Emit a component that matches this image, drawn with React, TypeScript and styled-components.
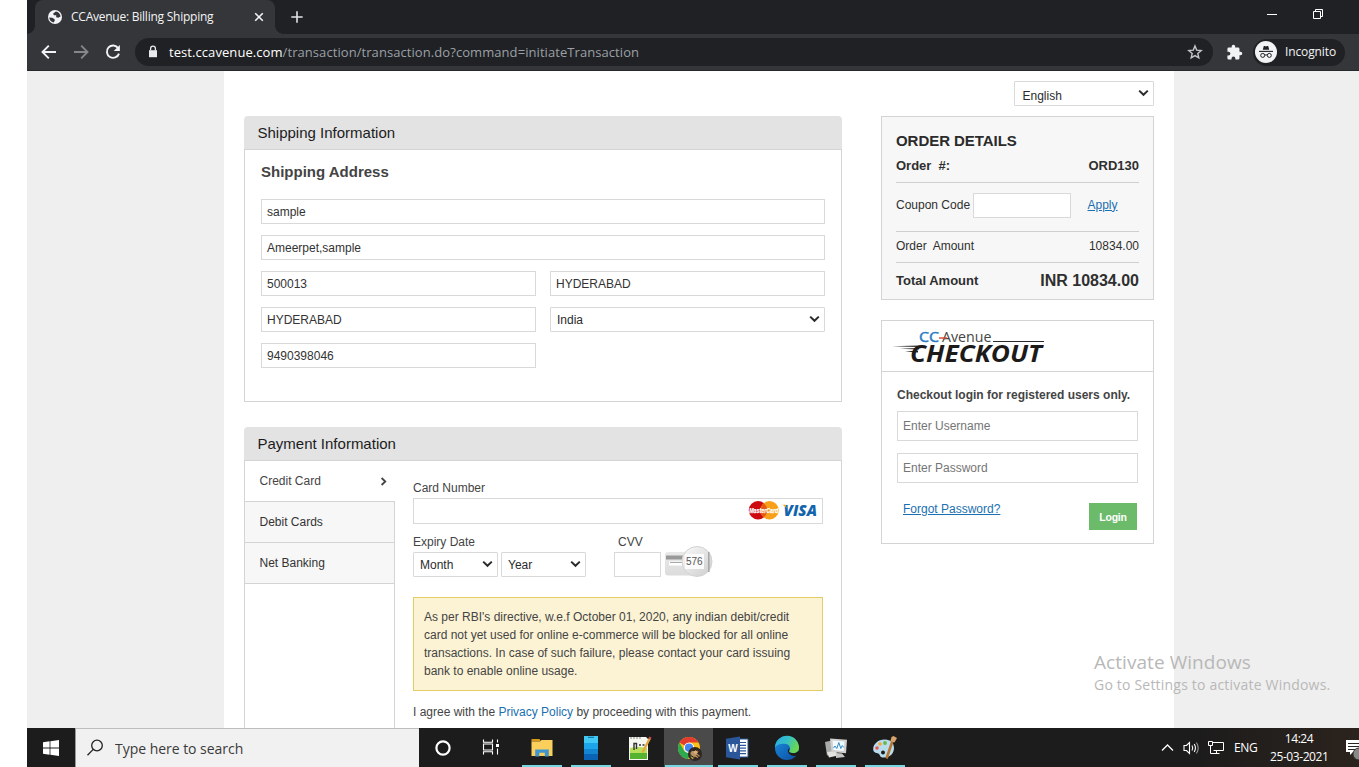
import React from 'react';
import styled, { createGlobalStyle, css } from 'styled-components';

const GlobalStyle = createGlobalStyle`
  *, *::before, *::after { box-sizing: border-box; }
  body { margin: 0; background: #fff; overflow: hidden; }
  svg { display: block; flex: none; }
`;

const uiFont = css`font-family: "Open Sans", "Noto Sans", sans-serif;`;

/* ---------- window frame ---------- */
const Screen = styled.div`
  display: flex;
  flex-direction: column;
  width: 1359px;
  height: 767px;
  padding-left: 27px;
  overflow: hidden;
  background: #fff;
  color: #333;
  font: 12px/18px "Liberation Sans", Arial, sans-serif;
`;

const TabStrip = styled.div`
  display: flex;
  flex: none;
  height: 34px;
  padding-left: 8px;
  background: #202124;
`;

const Tab = styled.div`
  position: relative;
  display: flex;
  align-items: center;
  width: 240px;
  height: 34px;
  padding-left: 12px;
  border-radius: 8px 8px 0 0;
  background: #35363a;
  ${uiFont}
  &::before, &::after {
    content: '';
    position: absolute;
    bottom: 0;
    width: 8px;
    height: 8px;
  }
  &::before { left: -8px; background: radial-gradient(circle at 0 0, transparent 7.5px, #35363a 8px); }
  &::after { right: -8px; background: radial-gradient(circle at 100% 0, transparent 7.5px, #35363a 8px); }
`;

const TabTitle = styled.span`
  width: 182px;
  margin-left: 8px;
  color: #f1f3f4;
  font-size: 12px;
  letter-spacing: -0.24px;
  white-space: nowrap;
`;

const NewTab = styled.div`
  display: flex;
  flex: 1;
  align-items: center;
  padding-left: 16px;
`;

const WindowButtons = styled.div`
  display: flex;
  align-items: center;
  gap: 36px;
  height: 28px;
  padding-right: 36px;
`;

const Toolbar = styled.div`
  display: flex;
  flex: none;
  align-items: center;
  height: 37px;
  padding-left: 13px;
  border-bottom: 1px solid #27282b;
  background: #35363a;
  ${uiFont}
`;

const NavIcons = styled.div`
  display: flex;
  gap: 14px;
  width: 95px;
`;

const Omnibox = styled.div`
  display: flex;
  align-items: center;
  width: 1078px;
  height: 28px;
  padding: 0 10px 0 10px;
  border-radius: 14px;
  background: #202124;
`;

const Url = styled.div`
  flex: 1;
  margin-left: 8px;
  color: #9aa0a6;
  font-size: 13px;
  letter-spacing: 0.07px;
  white-space: nowrap;
  b { color: #fff; font-weight: 400; }
`;

const Extension = styled.div`
  margin: 0 10px 0 13px;
`;

const Incognito = styled.div`
  display: flex;
  align-items: center;
  width: 92px;
  height: 27px;
  padding-left: 2px;
  border-radius: 14px;
  background: #202124;
  color: #f1f3f4;
  font-size: 12px;
  letter-spacing: -0.12px;
  svg { margin-right: 8px; }
`;

/* ---------- page ---------- */
const Viewport = styled.div`
  display: flex;
  flex: none;
  height: 657px;
  padding-left: 197px;
  background: #efefef;
  overflow: hidden;
`;

const Page = styled.main`
  display: flex;
  flex: none;
  width: 950px;
  height: 657px;
  padding-left: 20px;
  background: #fff;
`;

const MainColumn = styled.div`
  display: flex;
  flex-direction: column;
  gap: 25px;
  width: 598px;
  padding-top: 45px;
`;

const SideColumn = styled.div`
  display: flex;
  flex-direction: column;
  width: 273px;
  margin-left: 39px;
  padding-top: 10px;
`;

const PanelHeader = styled.h2`
  height: 33px;
  margin: 0;
  padding-left: 13.5px;
  border-radius: 4px 4px 0 0;
  background: #e3e3e3;
  color: #1c1c1c;
  font: 15px/34px "Liberation Sans", Arial, sans-serif;
`;

const PanelBody = styled.div<{ $h: number }>`
  height: ${(p) => p.$h}px;
  border: 1px solid #d4d4d4;
`;

const AddressBody = styled(PanelBody)`
  padding: 13px 16px 0;
`;

const AddressTitle = styled.h3`
  margin: 0 0 18px;
  color: #444;
  font: bold 15px/18px "Liberation Sans", Arial, sans-serif;
`;

const FieldGrid = styled.div`
  display: grid;
  grid-template-columns: 275px 275px;
  gap: 11px 14px;
`;

const Field = styled.div<{ $wide?: boolean; $w?: number; $h?: number; $hint?: boolean }>`
  display: flex;
  flex: none;
  align-items: center;
  ${(p) => p.$wide && 'grid-column: span 2;'}
  ${(p) => p.$w && `width: ${p.$w}px;`}
  height: ${(p) => p.$h ?? 25}px;
  padding-left: 5px;
  border: 1px solid #d9d9d9;
  background: #fff;
  color: ${(p) => (p.$hint ? '#757575' : '#333')};
`;

const SelectBox = styled(Field)`
  justify-content: space-between;
  padding: 0 4px 0 6px;
  border-radius: 1px;
  color: #2b2b2b;
  white-space: nowrap;
  svg { margin-bottom: 1px; }
`;

const LanguageSelect = styled(SelectBox)`
  align-self: flex-end;
  padding-left: 7.5px;
  margin-bottom: 10px;
  span { padding-top: 4px; }
  svg { margin-bottom: 2px; }
`;

const PaymentBody = styled(PanelBody)`
  display: flex;
  border-bottom: 0;
`;

const MethodList = styled.div`
  width: 150px;
  border-right: 1px solid #d4d4d4;
`;

const Method = styled.div<{ $active?: boolean }>`
  display: flex;
  align-items: center;
  justify-content: space-between;
  height: 41px;
  width: ${(p) => (p.$active ? 150 : 149)}px;
  padding: 0 7px 1px 14.5px;
  border-bottom: 1px solid #d4d4d4;
  background: ${(p) => (p.$active ? '#fff' : '#f7f7f7')};
  color: ${(p) => (p.$active ? '#444' : '#333')};
  svg { margin-top: 2px; }
`;

const CardForm = styled.div`
  width: 410px;
  margin-left: 18px;
  padding-top: 18px;
  color: #444;
`;

const CardField = styled(Field)`
  justify-content: flex-end;
  margin-top: 1px;
  padding-right: 4px;
`;

const FormLabels = styled.div`
  display: flex;
  margin-top: 9px;
  span:first-child { width: 205px; }
`;

const ExpiryRow = styled.div`
  display: flex;
  align-items: flex-end;
  height: 31px;
  margin-top: -5px;
`;

const YearSelect = styled(SelectBox)`margin: 0 28px 0 3px;`;
const CvvArt = styled.div`margin-left: 4px;`;

const Notice = styled.div`
  height: 94px;
  margin-top: 20px;
  padding: 10px 10px 0;
  border: 1px solid #e3cc62;
  background: #fcf3d5;
  color: #444;
  white-space: nowrap;
`;

const Agreement = styled.div`
  margin-top: 12px;
  a { color: #1a70b0; }
`;

const OrderBox = styled.section`
  height: 184px;
  margin-bottom: 20px;
  padding: 15px 14px 0;
  border: 1px solid #d4d4d4;
  background: #f7f7f7;
`;

const OrderTitle = styled.h3`
  height: 18px;
  margin: 0;
  color: #2b2b2b;
  font: bold 15px/18px "Liberation Sans", Arial, sans-serif;
  letter-spacing: -0.05px;
`;

const OrderRow = styled.div<{ $h: number; $bold?: boolean; $last?: boolean }>`
  display: flex;
  align-items: center;
  justify-content: space-between;
  height: ${(p) => p.$h}px;
  border-bottom: ${(p) => (p.$last ? 0 : '1px solid #cfcfcf')};
  color: #2f2f2f;
  white-space: pre;
  ${(p) => p.$bold && 'font-weight: bold; font-size: 13px;'}
  strong { font-size: 16px; }
`;

const AmountRow = styled(OrderRow)`
  padding-bottom: 2px;
`;

const CouponRow = styled(OrderRow)`
  justify-content: flex-start;
  padding-bottom: 3px;
  a, span { padding-bottom: 2px; }
  a { margin-left: 16.5px; color: #1a70b0; text-decoration: underline; }
  span { width: 77px; }
`;

const CheckoutBox = styled.section`
  height: 224px;
  border: 1px solid #d4d4d4;
`;

const CheckoutLogo = styled.div`
  height: 51px;
  padding: 5px 0 0 8px;
  border-bottom: 1px solid #d4d4d4;
`;

const LoginForm = styled.div`
  display: flex;
  flex-direction: column;
  gap: 12px;
  padding: 14px 15px 0;
  p {
    margin: 0 0 -5px;
    color: #444;
    font-weight: bold;
    white-space: nowrap;
  }
`;

const LoginActions = styled.div`
  display: flex;
  justify-content: space-between;
  padding: 5px 1px 0 6px;
  a { color: #1a70b0; text-decoration: underline; }
`;

const LoginButton = styled.div`
  width: 48px;
  height: 27px;
  margin-top: 3px;
  background: #6cbb6b;
  color: #fff;
  font: bold 10.5px/29px "Liberation Sans", Arial, sans-serif;
  letter-spacing: -0.2px;
  text-align: center;
`;

const Watermark = styled.div`
  position: absolute;
  left: 1094px;
  top: 650px;
  color: #b8b8b8;
  ${uiFont}
  font-size: 14px;
  line-height: 21px;
  letter-spacing: 0.2px;
  white-space: nowrap;
  div:first-child { font-size: 19px; line-height: 24px; letter-spacing: 0.06px; }
`;

/* ---------- taskbar ---------- */
const Taskbar = styled.footer`
  display: flex;
  flex: none;
  height: 39px;
  background: #1d1c1c;
  color: #fff;
  ${uiFont}
`;

const Start = styled.div`
  display: flex;
  align-items: center;
  justify-content: center;
  width: 48px;
`;

const Search = styled.div`
  display: flex;
  align-items: center;
  gap: 12px;
  width: 344px;
  padding-left: 11px;
  border-top: 1px solid #bdbdbd;
  border-left: 1px solid #999;
  background: #f1f1f1;
  color: #3a3a3a;
  font-size: 14px;
  letter-spacing: -0.03px;
  span { padding-top: 2px; }
`;

const TaskButton = styled.div<{ $w?: number; $open?: boolean; $active?: boolean }>`
  display: flex;
  flex-direction: column;
  align-items: center;
  justify-content: space-between;
  width: ${(p) => p.$w ?? 49}px;
  padding-top: 7px;
  background: ${(p) => (p.$active ? '#4b4a4a' : 'transparent')};
  &::after {
    content: '';
    width: ${(p) => (p.$active ? 48 : 40)}px;
    height: 2px;
    background: ${(p) => (p.$open ? '#76d7e0' : 'transparent')};
  }
`;

const Tray = styled.div`
  display: flex;
  flex: 1;
  align-items: center;
  justify-content: flex-end;
  font-size: 12px;
  background: linear-gradient(90deg, transparent 65%, #2b231d);
`;

const Lang = styled.span`
  width: 24px;
  margin: 0 12px 0 9px;
  letter-spacing: -0.4px;
`;

const Clock = styled.div`
  width: 58px;
  margin-right: 18px;
  padding-top: 1px;
  text-align: center;
  letter-spacing: -0.42px;
  white-space: nowrap;
`;

/* ---------- small drawings ---------- */
const Arrow = ({ color, flip }: { color: string; flip?: boolean }) => (
  <svg width="18" height="18" viewBox="0 0 18 18" fill="none" stroke={color} strokeWidth="1.9">
    <path d={flip ? 'M2 9h13M9.2 2.7 15.5 9l-6.3 6.3' : 'M16 9H3M8.8 2.7 2.5 9l6.3 6.3'} />
  </svg>
);

const Chevron = () => (
  <svg width="11" height="8" viewBox="0 0 11 8" fill="none" stroke="#2b2b2b" strokeWidth="2">
    <path d="M1.2 1.6 5.5 5.8l4.3-4.2" />
  </svg>
);

const CardBrands = () => (
  <svg width="70" height="22" viewBox="0 0 70 22">
    <circle cx="10" cy="10.2" r="9.2" fill="#cc0a10" />
    <circle cx="21.5" cy="10.2" r="9.2" fill="#f9a01b" />
    <path d="M15.800 3.200a9 9 0 0 1 0 14 9 9 0 0 1 0-14" fill="#e65a13" />
    <text x="1.2" y="13" fontSize="7.2" fontWeight="bold" fontStyle="italic" fill="#fff" stroke="#fff" strokeWidth=".25" textLength="29" lengthAdjust="spacingAndGlyphs" fontFamily="Liberation Sans">MasterCard</text>
    <text x="35.5" y="15.8" fontSize="15.500" fontWeight="800" fontStyle="italic" fill="#1264ad" textLength="33.5" lengthAdjust="spacingAndGlyphs" fontFamily="Open Sans">VISA</text>
    <path d="M34 4.700h3.800l1 3.600Q37 5.500 34 4.700z" fill="#f5a623" />
  </svg>
);

const CvvCard = () => (
  <svg width="50" height="32" viewBox="0 0 50 32">
    <defs>
      <linearGradient id="lens" x1="0" y1="0" x2="1" y2="1">
        <stop offset="0" stopColor="#fafafa" />
        <stop offset="1" stopColor="#cdcdcd" />
      </linearGradient>
      <linearGradient id="card" x1="0" y1="0" x2="0" y2="1">
        <stop offset="0" stopColor="#e9e9e9" />
        <stop offset="1" stopColor="#dcdcdc" />
      </linearGradient>
    </defs>
    <rect x="0" y="7" width="34" height="23.5" rx="3" fill="url(#card)" />
    <path d="M1 10.500h19v4H1z" fill="#999" />
    <path d="M4 16.5h16v4H4z" fill="#fff" />
    <path d="M5 17.500h12" stroke="#aaa" />
    <circle cx="32" cy="16.500" r="15" fill="url(#lens)" stroke="#d2d2d2" />
    <path d="M20 9h19v15H20z" fill="#fbfbfb" />
    <path d="M43.8 7v20" stroke="#a8a8a8" strokeWidth="1.6" />
    <text x="21" y="19.500" fontSize="10" fill="#555" fontFamily="Liberation Sans">576</text>
  </svg>
);

const CheckoutMark = () => (
  <svg width="160" height="42" viewBox="0 0 160 42">
    <text x="29" y="16" fontSize="14.500" fill="#2d7bc4" stroke="#2d7bc4" strokeWidth=".5" textLength="20" lengthAdjust="spacingAndGlyphs" fontFamily="Open Sans">CC</text>
    <text x="52" y="16" fontSize="14.5" fill="#444" textLength="49.500" lengthAdjust="spacingAndGlyphs" fontFamily="Open Sans">Avenue</text>
    <path d="M49 12h8" stroke="#d9452f" strokeWidth="1.4" />
    <path d="M103 15.5h51" stroke="#2b2b2b" strokeWidth="1" />
    <path d="M2 20.2 30 19.6v1.500zM10 22.800 29 22v1.600zM15 25.400l13-.8v1.800z" fill="#222" />
    <text x="20" y="36.300" fontSize="24" fontWeight="bold" fontStyle="italic" fill="#1d1a1a" textLength="132" lengthAdjust="spacingAndGlyphs" fontFamily="Open Sans">CHECKOUT</text>
  </svg>
);

const TaskIcon = ({ children }: { children: React.ReactNode }) => (
  <svg width="26" height="26" viewBox="0 0 26 26" fill="none">{children}</svg>
);

export default function App() {
  return (
    <Screen>
      <GlobalStyle />
      <TabStrip>
        <Tab>
          <svg width="16" height="16" viewBox="0 0 16 16">
            <circle cx="8" cy="8" r="7" fill="#f1f3f4" />
            <path d="M8.8 2.4 6 4.8l1 1.4h2.2v2l2 .6 2.4-1.3a5.8 5.8 0 0 0-4.8-5.1M2.2 8.6l3 .1 2.5 1.6v1.5L6.6 13.6A5.8 5.8 0 0 1 2.2 8.6" fill="#35363a" />
          </svg>
          <TabTitle>CCAvenue: Billing Shipping</TabTitle>
          <svg width="12" height="12" viewBox="0 0 12 12" stroke="#f1f3f4" strokeWidth="1.6">
            <path d="m2.2 2.2 7.6 7.6M9.8 2.2 2.2 9.8" />
          </svg>
        </Tab>
        <NewTab>
          <svg width="12" height="12" viewBox="0 0 12 12" stroke="#e0e2e5" strokeWidth="1.6">
            <path d="M6 .3v11.4M.3 6h11.4" />
          </svg>
        </NewTab>
        <WindowButtons>
          <svg width="10" height="10" viewBox="0 0 10 10"><path d="M0 5.5h10" stroke="#fff" /></svg>
          <svg width="10" height="10" viewBox="0 0 10 10" fill="none" stroke="#fff">
            <path d="M.5 2.5h7v7h-7zM2.5 2.5v-2h7v7h-2" />
          </svg>
        </WindowButtons>
      </TabStrip>

      <Toolbar>
        <NavIcons>
          <Arrow color="#f1f3f4" />
          <Arrow color="#85878b" flip />
          <svg width="18" height="18" viewBox="0 0 18 18">
            <path d="M14.2 5.1A6.2 6.2 0 1 0 15 10.6" fill="none" stroke="#f1f3f4" strokeWidth="1.9" />
            <path d="M15.9 1.9v6.2H9.7z" fill="#f1f3f4" />
          </svg>
        </NavIcons>
        <Omnibox>
          <svg width="16" height="16" viewBox="0 0 16 16">
            <path d="M4 6.2h8v7H4z" fill="#e8eaed" />
            <path d="M5.6 6.5V4.6a2.4 2.4 0 0 1 4.8 0v1.9" fill="none" stroke="#e8eaed" strokeWidth="1.3" />
          </svg>
          <Url><b>test.ccavenue.com</b>/transaction/transaction.do?command=initiateTransaction</Url>
          <svg width="16" height="16" viewBox="0 0 16 16" fill="none" stroke="#c4c7ca" strokeWidth="1.4">
            <path d="m8 1.9 1.7 4.2 4.5.4-3.4 3 1 4.4L8 11.6l-3.8 2.3 1-4.4-3.4-3 4.5-.4z" />
          </svg>
        </Omnibox>
        <Extension>
          <svg width="17" height="17" viewBox="0 0 24 24">
            <path d="M20.5 11H19V7a2 2 0 0 0-2-2h-4V3.5a2.5 2.5 0 0 0-5 0V5H4a2 2 0 0 0-2 2v3.8h1.5a2.7 2.7 0 0 1 0 5.4H2V20a2 2 0 0 0 2 2h3.8v-1.5a2.7 2.7 0 0 1 5.4 0V22H17a2 2 0 0 0 2-2v-4h1.5a2.5 2.5 0 0 0 0-5" fill="#f1f3f4" />
          </svg>
        </Extension>
        <Incognito>
          <svg width="22" height="22" viewBox="0 0 22 22">
            <circle cx="11" cy="11" r="11" fill="#f1f3f4" />
            <path d="M7.800 8.700 8.800 5h1.100l1.100.5 1.100-.5h1.100l1 3.700z" fill="#202124" />
            <path d="M4 10.400h14" stroke="#202124" strokeWidth="1.1" />
            <g fill="none" stroke="#202124"><circle cx="7.7" cy="14.4" r="2" /><circle cx="14.3" cy="14.4" r="2" /><path d="M9.7 14.2q1.3-.8 2.6 0" /></g>
          </svg>
          Incognito
        </Incognito>
      </Toolbar>

      <Viewport>
        <Page>
          <MainColumn>
            <section>
              <PanelHeader>Shipping Information</PanelHeader>
              <AddressBody $h={253}>
                <AddressTitle>Shipping Address</AddressTitle>
                <FieldGrid>
                  <Field $wide>sample</Field>
                  <Field $wide>Ameerpet,sample</Field>
                  <Field>500013</Field>
                  <Field>HYDERABAD</Field>
                  <Field>HYDERABAD</Field>
                  <SelectBox>India<Chevron /></SelectBox>
                  <Field>9490398046</Field>
                </FieldGrid>
              </AddressBody>
            </section>
            <section>
              <PanelHeader>Payment Information</PanelHeader>
              <PaymentBody $h={268}>
                <MethodList>
                  <Method $active>
                    Credit Card
                    <svg width="8" height="9" viewBox="0 0 8 9" fill="none" stroke="#444" strokeWidth="1.8"><path d="m1.6 1 3.7 3.5L1.6 8" /></svg>
                  </Method>
                  <Method>Debit Cards</Method>
                  <Method>Net Banking</Method>
                </MethodList>
                <CardForm>
                  <div>Card Number</div>
                  <CardField $h={26}><CardBrands /></CardField>
                  <FormLabels><span>Expiry Date</span><span>CVV</span></FormLabels>
                  <ExpiryRow>
                    <SelectBox $w={85}>Month<Chevron /></SelectBox>
                    <YearSelect $w={85}>Year<Chevron /></YearSelect>
                    <Field $w={47} />
                    <CvvArt><CvvCard /></CvvArt>
                  </ExpiryRow>
                  <Notice>
                    As per RBI's directive, w.e.f October 01, 2020, any indian debit/credit<br />
                    card not yet used for online e-commerce will be blocked for all online<br />
                    transactions. In case of such failure, please contact your card issuing<br />
                    bank to enable online usage.
                  </Notice>
                  <Agreement>I agree with the <a>Privacy Policy</a> by proceeding with this payment.</Agreement>
                </CardForm>
              </PaymentBody>
            </section>
          </MainColumn>

          <SideColumn>
            <LanguageSelect $w={140}><span>English</span><Chevron /></LanguageSelect>
            <OrderBox>
              <OrderTitle>ORDER DETAILS</OrderTitle>
              <OrderRow $h={33} $bold><span>{'Order  #:'}</span><span>ORD130</span></OrderRow>
              <CouponRow $h={49}><span>Coupon Code</span><Field $w={98} /><a>Apply</a></CouponRow>
              <AmountRow $h={31}><span>{'Order  Amount'}</span><span>10834.00</span></AmountRow>
              <OrderRow $h={36} $bold $last><span>Total Amount</span><strong>INR 10834.00</strong></OrderRow>
            </OrderBox>
            <CheckoutBox>
              <CheckoutLogo><CheckoutMark /></CheckoutLogo>
              <LoginForm>
                <p>Checkout login for registered users only.</p>
                <Field $h={30} $hint>Enter Username</Field>
                <Field $h={30} $hint>Enter Password</Field>
                <LoginActions><a>Forgot Password?</a><LoginButton>Login</LoginButton></LoginActions>
              </LoginForm>
            </CheckoutBox>
          </SideColumn>
        </Page>
      </Viewport>

      <Watermark>
        <div>Activate Windows</div>
        <div>Go to Settings to activate Windows.</div>
      </Watermark>

      <Taskbar>
        <Start>
          <svg width="16" height="16" viewBox="0 0 16 16" fill="#fff">
            <path d="M0 2.2 6.6 1.3v6.2H0zM7.4 1.2 16 0v7.5H7.4zM0 8.4h6.6v6.3L0 13.8zM7.4 8.4H16V16l-8.6-1.2z" />
          </svg>
        </Start>
        <Search>
          <svg width="16" height="18" viewBox="0 0 16 18" fill="none" stroke="#222" strokeWidth="1.3">
            <circle cx="10" cy="6.5" r="5.3" /><path d="M6.2 10.4.5 16.3" />
          </svg>
          <span>Type here to search</span>
        </Search>
        <TaskButton $w={48}>
          <TaskIcon><circle cx="13" cy="13" r="6.6" stroke="#fff" strokeWidth="2.2" /></TaskIcon>
        </TaskButton>
        <TaskButton $w={50}>
          <TaskIcon>
            <path d="M4.5 4.5v2.7h9V4.5M4.5 19.5v-2.7h9v2.7M4.5 9h9v6h-9zM18.5 4.5v3M18.5 13.5v6" stroke="#fff" strokeWidth="1.1" />
            <path d="M17 9h3v3h-3z" fill="#fff" />
          </TaskIcon>
        </TaskButton>
        <TaskButton $open>
          <TaskIcon>
            <path d="M2.5 4h8l1.5 2.5H2.5z" fill="#d99a1c" />
            <path d="M2.5 6.5 11 6.4l1.5-1.4H23.500v16h-21z" fill="#fbcf5c" />
            <path d="M6.200 21.500v-7h13.600v7h-4v-3.800h-5.500v3.800z" fill="#3f96cf" />
          </TaskIcon>
        </TaskButton>
        <TaskButton $open>
          <TaskIcon>
            <path d="M6 1h14v9H6z" fill="#42c8f5" /><path d="M6 8h14v10H6z" fill="#1ca5e8" /><path d="M6 17.5h14V25H6z" fill="#0b63b5" />
            <path d="M6 14h14v5H6z" fill="#1385d3" /><path d="M10 2.3h6" stroke="#14648f" />
          </TaskIcon>
        </TaskButton>
        <TaskButton>
          <TaskIcon>
            <path d="M2 2h17l2 2v21H2z" fill="#f5f7f0" /><path d="M3 13q9-2 17 0v11H3z" fill="#b9e05a" /><path d="M3 18h17v6H3z" fill="#55b32f" />
            <path d="M4 2v2m3-2v2m3-2v2m3-2v2" stroke="#888" />
            <path d="M7 15V8.500h2.500V14M12 10h2M15.500 10h2" stroke="#333" strokeWidth="1.4" />
            <path d="m23 3-7.500 14.500" stroke="#e6a83c" strokeWidth="2.4" /><path d="m23.500 2-1 2" stroke="#c5484a" strokeWidth="2.4" />
          </TaskIcon>
        </TaskButton>
        <TaskButton $open $active>
          <TaskIcon>
            <circle cx="13" cy="13" r="11" fill="#fbc116" />
            <path d="M13 13 3.400 7.600a11 11 0 0 1 19.200 0H13z" fill="#e33b2e" />
            <path d="M3.400 7.600A11 11 0 0 0 12 24l4.200-8-7.600.5z" fill="#2da94f" />
            <circle cx="13" cy="12.700" r="5.200" fill="#fff" /><circle cx="13" cy="12.700" r="4.100" fill="#4285f4" />
            <circle cx="19" cy="19" r="7" fill="#31261f" />
            <path d="M14.500 17.500q2-3 4-1l2-2 2 2-1.500 2 3 2.500-2.200 2-3-1.500-2 3-2-2z" fill="#b9935f" />
            <circle cx="19.500" cy="17" r="2" fill="#d7ae80" /><path d="M17.500 15.700q2.400-2 4.200.3M14.700 20.400l3 2M20.500 20l3 3" stroke="#17130f" />
          </TaskIcon>
        </TaskButton>
        <TaskButton $open>
          <TaskIcon>
            <path d="M12 4h11v18H12z" fill="#fff" stroke="#2b5797" />
            <path d="M15 7.5h6M15 10.3h6M15 13.1h6M15 15.9h6M15 18.7h6" stroke="#2b5797" strokeWidth="1.2" />
            <path d="M1 3.700 15 1.500v23L1 22.300z" fill="#2b579a" />
            <text x="3.3" y="16.8" fontSize="10" fontWeight="bold" fill="#fff" fontFamily="Liberation Sans">W</text>
          </TaskIcon>
        </TaskButton>
        <TaskButton $open>
          <TaskIcon>
            <defs>
              <linearGradient id="edgeTop" x1="0" y1="0" x2="1" y2=".4"><stop stopColor="#2aa9e8" /><stop offset=".55" stopColor="#35c1c5" /><stop offset="1" stopColor="#6bd653" /></linearGradient>
              <linearGradient id="edgeLow" x1="0" y1="0" x2="1" y2="1"><stop stopColor="#1b8fe0" /><stop offset="1" stopColor="#0c4a9e" /></linearGradient>
            </defs>
            <circle cx="13" cy="13" r="12" fill="url(#edgeLow)" />
            <path d="M1 12.5A12 12 0 0 1 25 13c0 3.5-2.8 5.2-5.8 5.2-3.5 0-4.9-1.5-3.8-2.9 1.5-2 .6-5.8-3.6-6.4C7 8.2 2.500 9.500 1 12.500" fill="url(#edgeTop)" />
            <path d="M15.400 15.300c-1.100 1.400.3 2.900 3.800 2.900 1.900 0 3.700-.7 4.800-2l1.800 1-2.300 3.300c-3 1-7 .5-9-2.500-1.200-1.900-.6-3.800.9-4.700z" fill="#1d1c1c" />
          </TaskIcon>
        </TaskButton>
        <TaskButton $open>
          <TaskIcon>
            <path d="m2 7 9-2v14l-7 1.500z" fill="#a9abab" /><path d="m4 17 9-1 2 4.500-9 2z" fill="#e3e3e0" />
            <path d="m7 3.500 17 1.300-1 13.500L8.500 17z" fill="#cfd0cf" /><path d="m9.500 5.500 12 1-.8 9.600L10.500 15z" fill="#f4f9fd" />
            <path d="m10.500 13 1.500-2 1.800 2.500 2-6 2 6 1.500-3 1.500 2" stroke="#2f8fce" /><path d="m13 18 6 .5 3 3.500-9 1z" fill="#c7c8c6" />
          </TaskIcon>
        </TaskButton>
        <TaskButton $open>
          <TaskIcon>
            <path d="M13 4.500C5.500 4.500.9 9.500 1.200 14.500c.3 4 4.300 3 5.800 4.500 1.600 1.700.5 3.500 5 3.500 6.500 0 10-4.500 10-9.500S18.500 4.500 13 4.500" fill="#b9dcec" />
            <circle cx="5" cy="13" r="1.800" fill="#e7564c" /><circle cx="8" cy="9" r="1.800" fill="#f5a536" /><circle cx="13" cy="8" r="1.900" fill="#67b74c" /><circle cx="11" cy="17.500" r="2" fill="#1d1c1c" />
            <path d="m20.500 6-6 17.500" stroke="#b87533" strokeWidth="2.600" /><path d="m18.500 6 1-4 2-1 3.500 2-2.500 4.500z" fill="#d8a36c" />
          </TaskIcon>
        </TaskButton>
        <Tray>
          <svg width="13" height="9" viewBox="0 0 13 9" fill="none" stroke="#fff" strokeWidth="1.300"><path d="M1 7.500 6.500 2 12 7.500" /></svg>
          <svg width="34" height="16" viewBox="-9 0 34 16" fill="none" stroke="#fff" strokeWidth="1.100">
            <path d="M1 5.500h2.500L6.500 2.500v11L3.500 10.500H1zM9 5.500q1.500 2.500 0 5M11.200 4q2.500 4 0 8" /><path d="M13.400 2.500q3.600 5.500 0 11" stroke="#999" />
          </svg>
          <svg width="17" height="16" viewBox="0 0 17 16" fill="none" stroke="#fff"><path d="M4.500 2.500h11v8h-10M.5 1.500h4v4h-4zM2.500 5.500v8h9M8.500 10.500v3" /></svg>
          <Lang>ENG</Lang>
          <Clock>14:24<br />25-03-2021</Clock>
          <svg width="13" height="24" viewBox="0 0 13 24">
            <path d="M0 4h13v12H7l-3 3v-3H0z" fill="#fff" /><path d="M2 7.500h11M2 10.500h11M2 13.500h7" stroke="#292522" />
            <circle cx="13" cy="18" r="6" fill="#888" stroke="#333" />
          </svg>
        </Tray>
      </Taskbar>
    </Screen>
  );
}
